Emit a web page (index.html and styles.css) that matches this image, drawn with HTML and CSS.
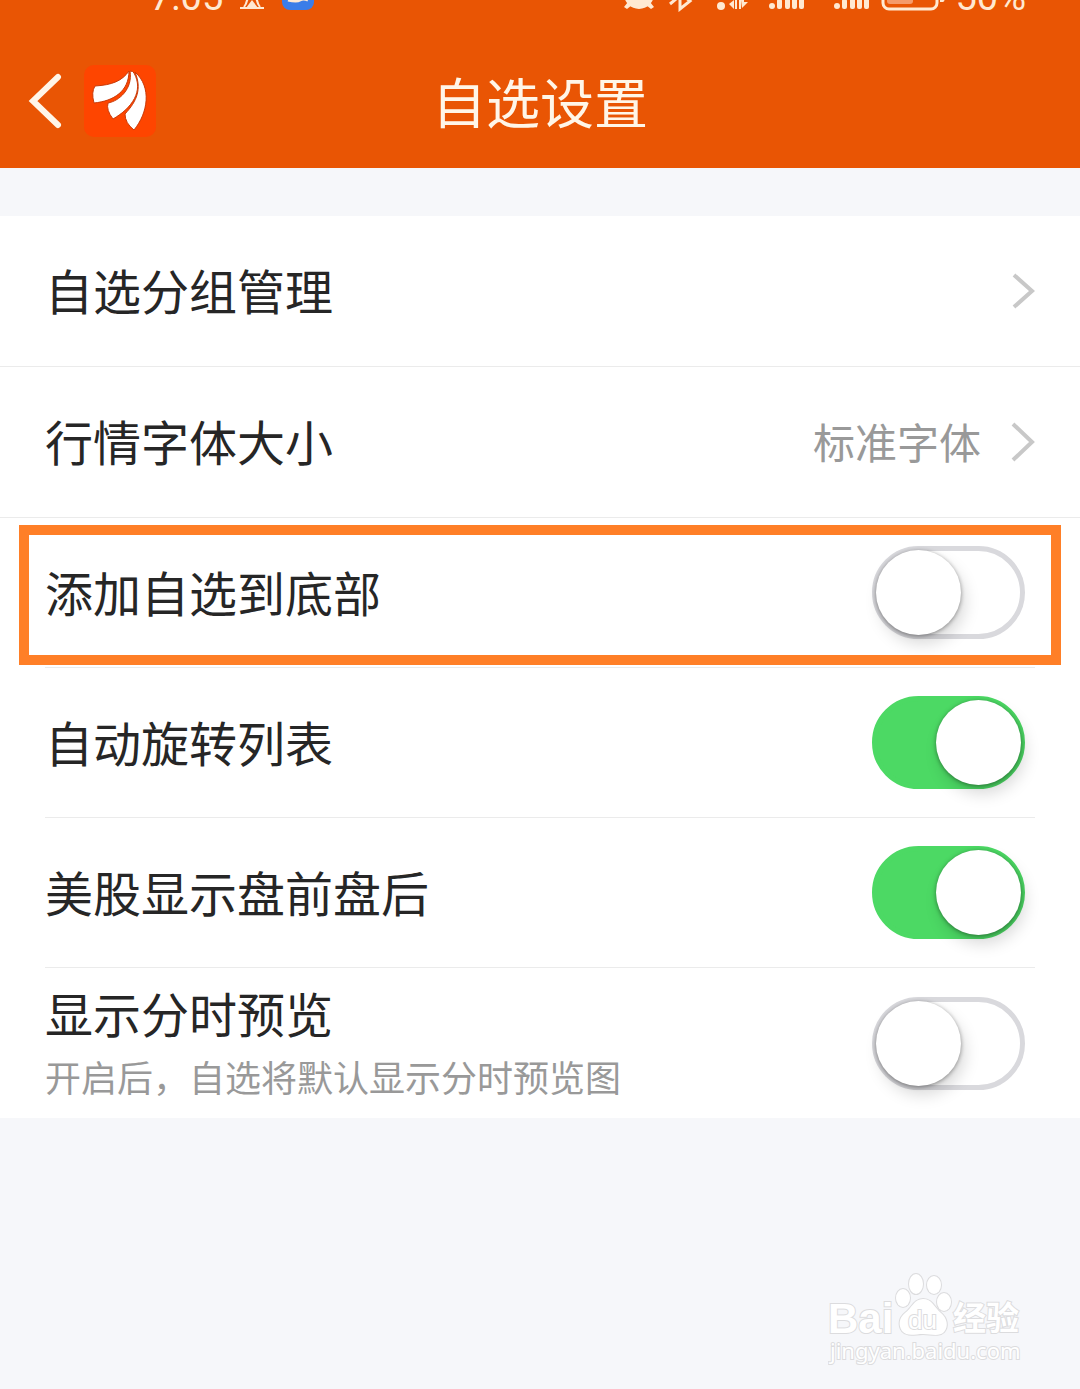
FILE: index.html
```
<!DOCTYPE html>
<html lang="zh-CN">
<head>
<meta charset="utf-8">
<meta name="viewport" content="width=device-width, initial-scale=1">
<title>自选设置</title>
<link rel="stylesheet" href="styles.css">
</head>
<body>
<div class="page">
  <header class="header">
    <div class="status">
      <div class="status-group">
        <span class="status-text">7:05</span>
        <svg width="26" height="38" viewBox="0 0 26 38" aria-hidden="true">
          <path d="M1 34h24M5 33C9 28 9 22 9 16h8c0 6 0 12 4 17" fill="none" stroke="currentColor" stroke-width="2"/>
          <path d="M7 34l6-8 6 8z" fill="currentColor"/>
        </svg>
        <svg width="34" height="38" viewBox="0 0 34 38" aria-hidden="true">
          <rect x="1" y="4" width="32" height="32" rx="8" fill="#3b7de8"/>
          <path d="M7 26q9 2 12 0t8 0" fill="none" stroke="currentColor" stroke-width="3"/>
        </svg>
      </div>
      <div class="status-group">
        <svg class="status-icons" width="346" height="38" viewBox="0 0 346 38" aria-hidden="true">
          <g fill="currentColor">
            <circle cx="16" cy="20" r="15"/>
            <path d="M5 28l-4 5 3 2 5-4zM27 28l4 5-3 2-5-4z"/>
            <circle cx="98" cy="32" r="4"/>
            <path d="M106 30l5-4v9zM112 25h2v10h-2zM116 25h2v10h-2zM118 26h3v-2v4h4l-6 6z"/>
            <circle cx="149" cy="32" r="3"/>
            <rect x="154" y="25" width="5" height="10" rx="2"/>
            <rect x="162" y="20" width="5" height="15" rx="2"/>
            <rect x="169" y="15" width="5" height="20" rx="2"/>
            <rect x="176" y="10" width="5" height="25" rx="2"/>
            <circle cx="214" cy="32" r="3"/>
            <rect x="219" y="25" width="5" height="10" rx="2"/>
            <rect x="227" y="20" width="5" height="15" rx="2"/>
            <rect x="234" y="15" width="5" height="20" rx="2"/>
            <rect x="241" y="10" width="5" height="25" rx="2"/>
            <path d="M317 22h3q3 5 0 6h-3z"/>
          </g>
          <path d="M47 30l18-15-8-8v28l10-8-18-14" fill="none" stroke="currentColor" stroke-width="3"/>
          <rect x="260" y="10" width="54" height="25" rx="6" fill="none" stroke="currentColor" stroke-width="3"/>
          <rect x="264" y="14" width="26" height="16" rx="3" fill="#f59a6a"/>
        </svg>
        <span class="status-text">50%</span>
      </div>
    </div>
    <div class="nav">
      <div class="nav-side">
        <button class="back" type="button" aria-label="返回">
          <svg width="34" height="56" viewBox="0 0 34 56" aria-hidden="true">
            <path d="M30 4L5 28l25 24" fill="none" stroke="#fff6e8" stroke-width="6" stroke-linecap="round"/>
          </svg>
        </button>
        <svg class="logo" width="72" height="72" viewBox="0 0 72 72" aria-hidden="true">
          <rect width="72" height="72" rx="10" fill="#fe4500"/>
          <g fill="#fff" stroke="#c93a08" stroke-width="1">
            <path d="M45 6C38 16 28 20 11 21Q7 27 10 38C30 36 45 26 45 6Z"/>
            <path d="M46 6C49 24 35 36 24 38Q22 45 29 54C48 43 60 26 50 8Q49 6 46 6Z"/>
            <path d="M51 7C58 24 53 36 41 49Q41 58 50 65C64 48 68 22 51 7Z"/>
          </g>
        </svg>
      </div>
      <h1 class="title">自选设置</h1>
      <div class="nav-side"></div>
    </div>
  </header>

  <main class="settings">
    <a class="row row-link" href="#groups">
      <span class="label">自选分组管理</span>
      <svg class="chevron" width="24" height="40" viewBox="0 0 24 40" aria-hidden="true"><path d="M3 4l18 16L3 36" /></svg>
    </a>
    <a class="row row-link" href="#font-size">
      <span class="label">行情字体大小</span>
      <span class="value">标准字体</span>
      <svg class="chevron" width="24" height="40" viewBox="0 0 24 40" aria-hidden="true"><path d="M2 2l19 18L2 38" /></svg>
    </a>
    <div class="row row-marked">
      <label class="label" for="to-bottom">添加自选到底部</label>
      <input class="switch" type="checkbox" id="to-bottom">
    </div>
    <div class="row">
      <label class="label" for="rotate">自动旋转列表</label>
      <input class="switch" type="checkbox" id="rotate" checked>
    </div>
    <div class="row">
      <label class="label" for="us-stocks">美股显示盘前盘后</label>
      <input class="switch" type="checkbox" id="us-stocks" checked>
    </div>
    <div class="row">
      <div class="text">
        <label class="label" for="preview">显示分时预览</label>
        <span class="note">开启后，自选将默认显示分时预览图</span>
      </div>
      <input class="switch" type="checkbox" id="preview">
    </div>
  </main>

  <footer class="watermark">
    <svg width="200" height="100" viewBox="0 0 200 100" role="img" aria-label="Baidu 经验">
      <g class="mark">
        <text class="mark-latin" x="0" y="64">Bai</text>
        <ellipse cx="75" cy="29" rx="7" ry="9"/>
        <ellipse cx="88" cy="15" rx="7" ry="10"/>
        <ellipse cx="106" cy="16" rx="7" ry="9"/>
        <ellipse cx="116" cy="33" rx="7" ry="9"/>
        <path d="M95 30c-9 0-11 9-18 14-6 5-7 12-3 18 5 6 13 3 21 3s16 3 21-2c5-6 3-14-3-19-7-6-9-14-18-14Z"/>
        <text class="mark-du" x="80" y="60">du</text>
        <text class="mark-cjk" x="125" y="61">经验</text>
        <text class="mark-url" x="2" y="90">jingyan.baidu.com</text>
      </g>
    </svg>
  </footer>
</div>
</body>
</html>
```
FILE: styles.css
```
* {
  box-sizing: border-box;
}

body {
  margin: 0;
  background: #f6f7fa;
  color: #262626;
  font-family: "Noto Sans CJK SC", sans-serif;
}

.page {
  display: flex;
  flex-direction: column;
  min-height: 100vh;
}

.header {
  background: #e95504;
  color: #ffe9d2;
}

/* Only the lower edge of the status bar is on screen. */
.status {
  display: flex;
  justify-content: space-between;
  align-items: flex-end;
  height: 12px;
  padding: 0 54px 0 150px;
  overflow: hidden;
  font-family: Roboto, sans-serif;
  font-size: 38px;
}

.status-text {
  line-height: 30px;
}

.status-group {
  display: flex;
  align-items: flex-end;
  gap: 16px;
}

.status-icons {
  margin-right: -30px;
}

.nav {
  display: flex;
  align-items: center;
  height: 156px;
  padding: 22px 28px 0;
}

.nav-side {
  display: flex;
  flex: 1;
  align-items: center;
  gap: 22px;
}

.back {
  display: flex;
  padding: 0;
  border: 0;
  background: none;
}

.title {
  margin: 0;
  color: #fff6e8;
  font-size: 54px;
  font-weight: 400;
  line-height: 72px;
}

.settings {
  margin-top: 48px;
  background: #fff;
}

.row {
  position: relative;
  display: flex;
  align-items: center;
  justify-content: space-between;
  min-height: 150px;
  margin: 0 45px;
  padding-right: 10px;
  border-bottom: 1px solid #ebebeb;
}

.row-link {
  min-height: 151px;
  margin: 0;
  padding: 0 45px;
  color: inherit;
  text-decoration: none;
}

.row:last-child {
  border-bottom: 0;
}

.row-marked::after {
  content: "";
  position: absolute;
  inset: 7px -26px 2px;
  border: 10px solid #ff7f27;
  pointer-events: none;
}

.label {
  font-size: 48px;
  line-height: 64px;
}

.row > .label,
.value {
  padding-bottom: 4px;
}

.text {
  display: flex;
  flex-direction: column;
  gap: 2px;
}

.note {
  color: #999;
  font-size: 36px;
  line-height: 60px;
}

.value {
  margin-left: auto;
  margin-right: 30px;
  color: #999;
  font-size: 42px;
}

.chevron {
  fill: none;
  stroke: #c8c8c8;
  stroke-width: 4;
}

.switch {
  appearance: none;
  width: 153px;
  height: 93px;
  margin: 0;
  padding: 0;
  border: 5px solid #d9d9dd;
  border-radius: 47px;
  background: #fff;
}

.switch::before {
  content: "";
  display: block;
  width: 85px;
  height: 85px;
  margin: -1px;
  border-radius: 50%;
  background: #fff;
  box-shadow: 0 1px 4px rgba(0, 0, 0, 0.4), 4px 9px 16px rgba(0, 0, 0, 0.15);
}

.switch:checked {
  border-color: #4cd964;
  background: #4cd964;
}

.switch:checked::before {
  margin-left: 59px;
}

.watermark {
  display: flex;
  justify-content: flex-end;
  margin-top: auto;
  padding: 0 52px 20px;
}

.mark {
  fill: #fff;
  stroke: #dcdcde;
  stroke-width: 2;
  paint-order: stroke;
}

.mark-latin {
  font: bold 42px "Liberation Sans", sans-serif;
}

.mark-du {
  font: 26px "Liberation Sans", sans-serif;
}

.mark-cjk {
  font: bold 33px "Noto Sans CJK SC", sans-serif;
}

.mark-url {
  font: 22px "Noto Sans", sans-serif;
}
```
